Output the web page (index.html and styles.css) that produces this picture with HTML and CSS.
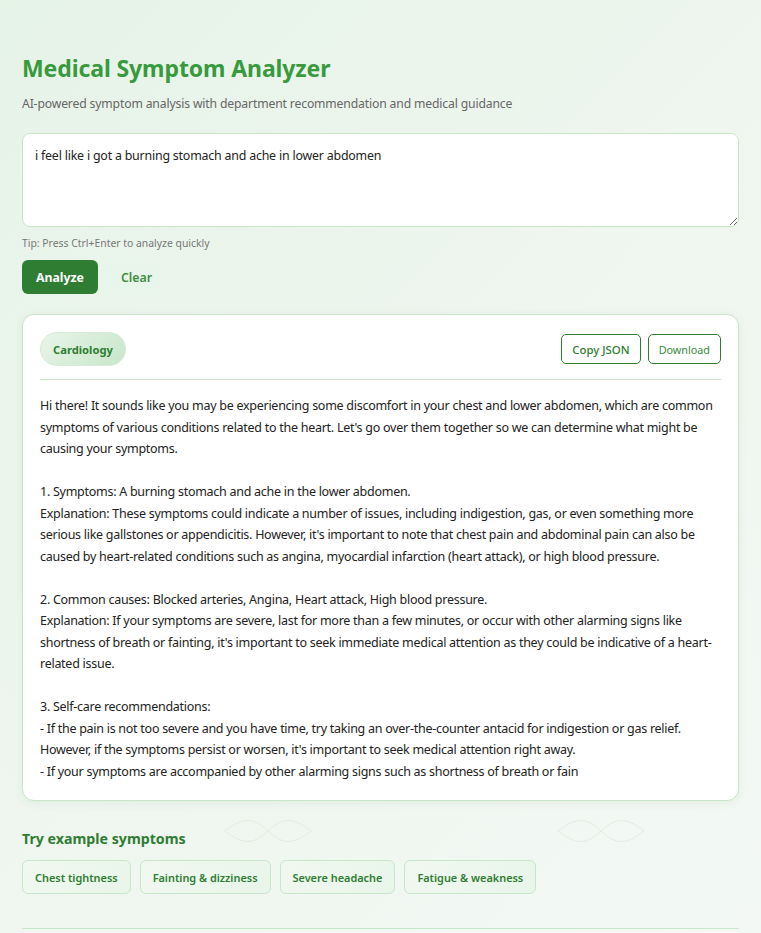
FILE: index.html
```html
<!DOCTYPE html>
<html lang="en">
<head>
<meta charset="utf-8">
<title>Medical Symptom Analyzer</title>
<link rel="stylesheet" href="styles.css">
</head>
<body>
<div class="bg-deco" aria-hidden="true">
  <svg class="infinity inf-left" viewBox="0 0 90 24" width="90" height="24"><path d="M2 12 C20 -2 30 -2 45 12 C60 26 70 26 88 12 C70 -2 60 -2 45 12 C30 26 20 26 2 12 Z" fill="none" stroke="#e2eee2" stroke-width="1"/></svg>
  <svg class="infinity inf-right" viewBox="0 0 90 24" width="90" height="24"><path d="M2 12 C20 -2 30 -2 45 12 C60 26 70 26 88 12 C70 -2 60 -2 45 12 C30 26 20 26 2 12 Z" fill="none" stroke="#e2eee2" stroke-width="1"/></svg>
</div>
<main class="container">
  <header class="header">
    <h1 class="title">Medical Symptom Analyzer</h1>
    <p class="subtitle">AI-powered symptom analysis with department recommendation and medical guidance</p>
  </header>

  <section class="input-section">
    <textarea class="symptom-input">i feel like i got a burning stomach and ache in lower abdomen</textarea>
    <p class="tip">Tip: Press Ctrl+Enter to analyze quickly</p>
    <div class="actions">
      <button class="btn btn-primary">Analyze</button>
      <button class="btn btn-ghost">Clear</button>
    </div>
  </section>

  <section class="result-card">
    <div class="result-head">
      <span class="dept-pill">Cardiology</span>
      <div class="head-actions">
        <button class="btn-outline">Copy JSON</button>
        <button class="btn-outline btn-light">Download</button>
      </div>
    </div>
    <div class="result-body">Hi there! It sounds like you may be experiencing some discomfort in your chest and lower abdomen, which are common
symptoms of various conditions related to the heart. Let's go over them together so we can determine what might be
causing your symptoms.

1. Symptoms: A burning stomach and ache in the lower abdomen.
Explanation: These symptoms could indicate a number of issues, including indigestion, gas, or even something more
serious like gallstones or appendicitis. However, it's important to note that chest pain and abdominal pain can also be
caused by heart-related conditions such as angina, myocardial infarction (heart attack), or high blood pressure.

2. Common causes: Blocked arteries, Angina, Heart attack, High blood pressure.
Explanation: If your symptoms are severe, last for more than a few minutes, or occur with other alarming signs like
shortness of breath or fainting, it's important to seek immediate medical attention as they could be indicative of a heart-
related issue.

3. Self-care recommendations:
- If the pain is not too severe and you have time, try taking an over-the-counter antacid for indigestion or gas relief.
However, if the symptoms persist or worsen, it's important to seek medical attention right away.
- If your symptoms are accompanied by other alarming signs such as shortness of breath or fain</div>
  </section>

  <section class="examples">
    <h2 class="examples-title">Try example symptoms</h2>
    <div class="chips">
      <button class="chip">Chest tightness</button>
      <button class="chip">Fainting &amp; dizziness</button>
      <button class="chip">Severe headache</button>
      <button class="chip">Fatigue &amp; weakness</button>
    </div>
  </section>
  <hr class="footer-line">
</main>
</body>
</html>
```

FILE: styles.css
```css
* { box-sizing: border-box; }

html, body { height: 100%; }

body {
  margin: 0;
  font-family: "Noto Sans", "Open Sans", sans-serif;
  color: #222;
  background: linear-gradient(135deg, #e6f3e7 0%, #eef6ef 50%, #f3f8f4 100%);
  position: relative;
  overflow: hidden;
}

.bg-deco {
  position: absolute;
  inset: 0;
  pointer-events: none;
}

.infinity { position: absolute; top: 819px; }
.inf-left { left: 223px; }
.inf-right { left: 556px; }

.container {
  position: relative;
  padding: 52px 22px 0 22px;
}

.title {
  margin: 0;
  font-size: 23px;
  line-height: 32px;
  font-weight: 700;
  color: #389a3d;
  letter-spacing: -0.1px;
}

.subtitle {
  margin: 11px 0 0 0;
  font-size: 12.2px;
  line-height: 18px;
  letter-spacing: -0.15px;
  color: #666;
}

.input-section { margin-top: 20px; }

.symptom-input {
  display: block;
  width: 100%;
  height: 94px;
  padding: 12px 12px;
  border: 1px solid #c8e6c9;
  border-radius: 8px;
  background: #fff;
  font-family: "Noto Sans", "Open Sans", sans-serif;
  font-size: 12.4px;
  letter-spacing: -0.2px;
  line-height: 20px;
  color: #222;
  resize: vertical;
  outline: none;
}

.tip {
  margin: 9px 0 0 0;
  font-size: 10.4px;
  line-height: 14px;
  color: #777;
}

.actions {
  display: flex;
  gap: 8px;
  margin-top: 10px;
}

.btn {
  font-family: "Noto Sans", "Open Sans", sans-serif;
  font-size: 12.3px;
  font-weight: 700;
  height: 34px;
  border-radius: 6px;
  border: none;
  cursor: pointer;
}

.btn-primary {
  background: #2e7d32;
  color: #fff;
  padding: 0 14px;
}

.btn-ghost {
  background: rgba(232, 245, 233, 0.6);
  color: #3c8d40;
  font-weight: 600;
  padding: 0 15px;
}

.result-card {
  margin-top: 20px;
  background: #fff;
  border: 1px solid #c8e6c9;
  border-radius: 12px;
  box-shadow: 0 2px 8px rgba(46, 125, 50, 0.08);
  padding: 17px 17px 18px 17px;
}

.result-head {
  display: flex;
  align-items: center;
  justify-content: space-between;
  padding-bottom: 13px;
  border-bottom: 1px solid #c8e6c9;
}

.dept-pill {
  display: inline-flex;
  align-items: center;
  height: 34px;
  padding: 0 12px;
  border-radius: 17px;
  background: linear-gradient(135deg, #e8f5e9, #c8e6c9);
  border: 1px solid #d5ecd6;
  color: #2e7d32;
  font-size: 11.2px;
  font-weight: 700;
}

.head-actions {
  display: flex;
  gap: 7px;
}

.btn-outline {
  height: 30px;
  padding: 0 10px;
  background: #fff;
  border: 1px solid #2e7d32;
  border-radius: 5px;
  color: #2e7d32;
  font-family: "Noto Sans", "Open Sans", sans-serif;
  font-size: 11.4px;
  font-weight: 500;
  cursor: pointer;
}

.btn-light { font-weight: 400; font-size: 10.8px; padding: 0 10px; color: #3a8a3e; }

.result-body {
  margin-top: 15px;
  white-space: pre;
  font-size: 12.5px;
  letter-spacing: -0.27px;
  line-height: 21.5px;
  color: #222;
}

.examples { margin-top: 28px; }

.examples-title {
  margin: 0;
  font-size: 14.2px;
  line-height: 20px;
  font-weight: 700;
  color: #2e7d32;
}

.chips {
  display: flex;
  gap: 9px;
  margin-top: 11px;
}

.chip {
  height: 34px;
  padding: 0 12px;
  border: 1px solid #c8e6c9;
  border-radius: 6px;
  background: linear-gradient(135deg, #f1f8f1, #e8f5e9);
  color: #2e7d32;
  font-family: "Noto Sans", "Open Sans", sans-serif;
  font-size: 10.9px;
  font-weight: 600;
  cursor: pointer;
}

.footer-line {
  margin: 34px 0 0 0;
  border: none;
  border-top: 1px solid #c8e6c9;
}
```
